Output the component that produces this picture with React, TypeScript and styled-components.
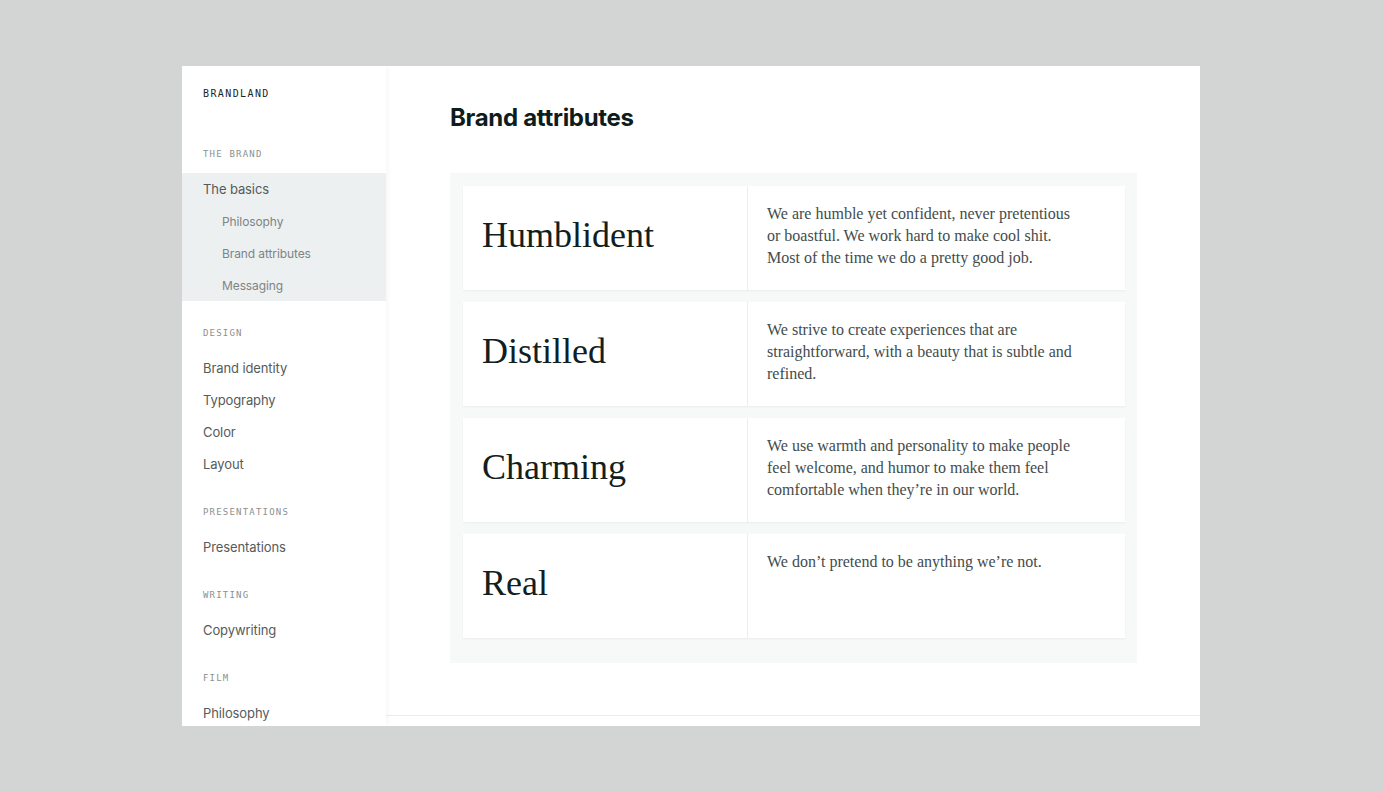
import React from "react";
import styled, { createGlobalStyle } from "styled-components";

const Global = createGlobalStyle`
  html, body { margin: 0; padding: 0; background: #d3d5d4; }
  body { font-family: Inter, "Noto Sans", sans-serif; }
  * { box-sizing: border-box; }
`;

const Frame = styled.div`
  margin: 66px 0 0 182px;
  width: 1018px;
  height: 660px;
  display: flex;
  overflow: hidden;
  background: #ffffff;
`;

const Sidebar = styled.nav`
  width: 204px;
  flex: none;
  background: #ffffff;
  padding-top: 21px;
  position: relative;
  z-index: 1;
  box-shadow: 2px 0 5px rgba(0, 0, 0, 0.035);
`;

const Logo = styled.div`
  font-family: "DejaVu Sans Mono", "Liberation Mono", monospace;
  font-size: 10px;
  line-height: 14px;
  letter-spacing: 1.4px;
  color: #1c2626;
  padding-left: 21px;
  margin-bottom: 21px;
`;

const Section = styled.div`
  padding-top: 25px;
`;

const Label = styled.div`
  font-family: "DejaVu Sans Mono", "Liberation Mono", monospace;
  font-size: 9px;
  line-height: 14px;
  letter-spacing: 1.2px;
  color: #8b9090;
  padding-left: 21px;
  margin-bottom: 12px;
`;

const Group = styled.div<{ $active?: boolean }>`
  background: ${(p) => (p.$active ? "#edf0f1" : "transparent")};
`;

const Item = styled.div<{ $sub?: boolean }>`
  height: 32px;
  display: flex;
  align-items: center;
  padding-left: ${(p) => (p.$sub ? "40px" : "21px")};
  font-size: ${(p) => (p.$sub ? "12px" : "13px")};
  color: ${(p) => (p.$sub ? "#7e8484" : "#555b5b")};
  letter-spacing: -0.1px;
`;

const Main = styled.main`
  flex: 1;
  padding: 36px 0 0 64px;
  display: flex;
  flex-direction: column;
`;

const Title = styled.h1`
  margin: 0 0 39px;
  font-size: 24px;
  line-height: 32px;
  font-weight: 700;
  letter-spacing: -0.3px;
  color: #0e1c1c;
`;

const Panel = styled.div`
  width: 687px;
  background: #f7f8f8;
  padding: 13px 12px 13px 13px;
`;

const Card = styled.div`
  height: 104px;
  display: flex;
  background: #ffffff;
  margin-bottom: 12px;
  box-shadow: 0 1px 2px rgba(0, 0, 0, 0.05);
`;

const Word = styled.div`
  width: 285px;
  flex: none;
  border-right: 1px solid #eceeee;
  display: flex;
  align-items: center;
  padding: 0 0 6px 19px;
  font-family: "Liberation Serif", "DejaVu Serif", serif;
  font-size: 36px;
  color: #102020;
`;

const Desc = styled.div`
  flex: 1;
  padding: 17px 0 0 19px;
  font-family: "Liberation Serif", "DejaVu Serif", serif;
  font-size: 16px;
  line-height: 22px;
  color: #434c4c;
`;

const DescText = styled.p`
  margin: 0;
  max-width: 310px;
`;

const Footer = styled.div`
  margin: 52px 0 0 -64px;
  border-top: 1px solid #eceeee;
  height: 40px;
`;

const attributes = [
  {
    word: "Humblident",
    text: "We are humble yet confident, never pretentious or boastful. We work hard to make cool shit. Most of the time we do a pretty good job.",
  },
  {
    word: "Distilled",
    text: "We strive to create experiences that are straightforward, with a beauty that is subtle and refined.",
  },
  {
    word: "Charming",
    text: "We use warmth and personality to make people feel welcome, and humor to make them feel comfortable when they\u2019re in our world.",
  },
  { word: "Real", text: "We don\u2019t pretend to be anything we\u2019re not." },
];

const sections = [
  { label: "DESIGN", items: ["Brand identity", "Typography", "Color", "Layout"] },
  { label: "PRESENTATIONS", items: ["Presentations"] },
  { label: "WRITING", items: ["Copywriting"] },
  { label: "FILM", items: ["Philosophy"] },
];

export default function App() {
  return (
    <>
      <Global />
      <Frame>
        <Sidebar>
          <Logo>BRANDLAND</Logo>
          <Section>
            <Label>THE BRAND</Label>
            <Group $active>
              <Item>The basics</Item>
              <Item $sub>Philosophy</Item>
              <Item $sub>Brand attributes</Item>
              <Item $sub>Messaging</Item>
            </Group>
          </Section>
          {sections.map((s) => (
            <Section key={s.label}>
              <Label>{s.label}</Label>
              <Group>
                {s.items.map((i) => (
                  <Item key={i}>{i}</Item>
                ))}
              </Group>
            </Section>
          ))}
        </Sidebar>
        <Main>
          <Title>Brand attributes</Title>
          <Panel>
            {attributes.map((a) => (
              <Card key={a.word}>
                <Word>{a.word}</Word>
                <Desc>
                  <DescText>{a.text}</DescText>
                </Desc>
              </Card>
            ))}
          </Panel>
          <Footer />
        </Main>
      </Frame>
    </>
  );
}
